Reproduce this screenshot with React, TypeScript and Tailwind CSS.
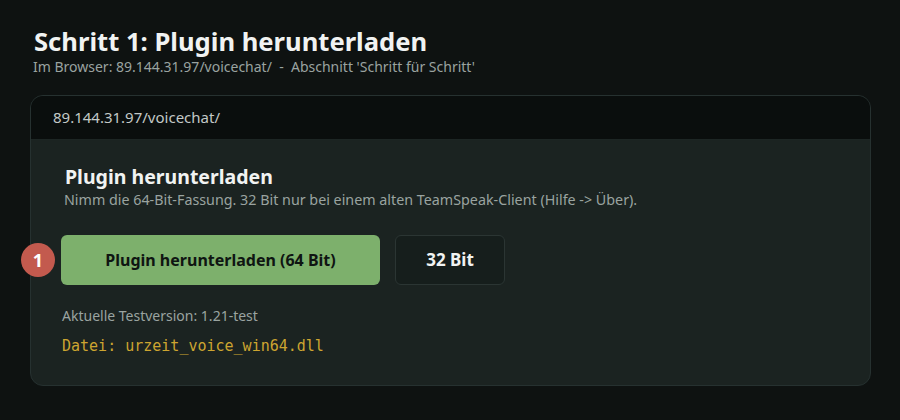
import React from "react";

export default function App() {
  const sans = { fontFamily: '"Noto Sans", "Open Sans", sans-serif' };
  return (
    <div className="w-[900px] h-[420px] bg-[#0e1211] overflow-hidden" style={sans}>
      <div className="pt-[27px] pl-[34px] pr-[29px]">
        <h1 className="text-[25.6px] leading-[30px] font-bold text-[#f1f3f2]">Schritt 1: Plugin herunterladen</h1>
        <p className="mt-[1px] text-[14px] leading-[18px] text-[#9aa3a0] -ml-[1px] whitespace-pre">Im Browser: 89.144.31.97/voicechat/  -  Abschnitt 'Schritt für Schritt'</p>
      </div>
      <div className="relative mt-[19px] ml-[30px] w-[841px] h-[291px] rounded-[13px] border border-[#263130] bg-[#1b2321]">
        <div className="h-[44px] rounded-t-[12px] bg-[#0a0e0d] border-b border-[#1d2624] flex items-center pl-[22px] text-[15px] text-[#c3c9c7]">
          89.144.31.97/voicechat/
        </div>
        <div className="pl-[34px] pt-[24px]">
          <h2 className="text-[19.5px] leading-[26px] font-bold text-[#f1f3f2]">Plugin herunterladen</h2>
          <p className="text-[14.3px] leading-[20px] text-[#9aa3a0] -ml-[1px]">Nimm die 64-Bit-Fassung. 32 Bit nur bei einem alten TeamSpeak-Client (Hilfe -&gt; Über).</p>
          <div className="flex gap-[15px] mt-[25px] -ml-[4px]">
            <div className="relative">
              <div className="absolute -left-[40px] top-[8px] w-[34px] h-[34px] rounded-full bg-[#c35a4e] flex items-center justify-center text-white font-bold text-[18px]">1</div>
              <button className="w-[319px] h-[50px] rounded-[6px] bg-[#7db06c] text-[#0f1512] font-bold text-[16px]">Plugin herunterladen (64 Bit)</button>
            </div>
            <button className="w-[110px] h-[50px] rounded-[6px] border border-[#2b3533] bg-[#161e1c] text-[#f1f3f2] font-bold text-[17px]">32 Bit</button>
          </div>
          <p className="mt-[21px] text-[14px] leading-[20px] text-[#9aa3a0] -ml-[3px]">Aktuelle Testversion: 1.21-test</p>
          <p className="mt-[10px] text-[15px] leading-[20px] text-[#cda530] -ml-[3px]" style={{ fontFamily: '"DejaVu Sans Mono", monospace' }}>Datei: urzeit_voice_win64.dll</p>
        </div>
      </div>
    </div>
  );
}
